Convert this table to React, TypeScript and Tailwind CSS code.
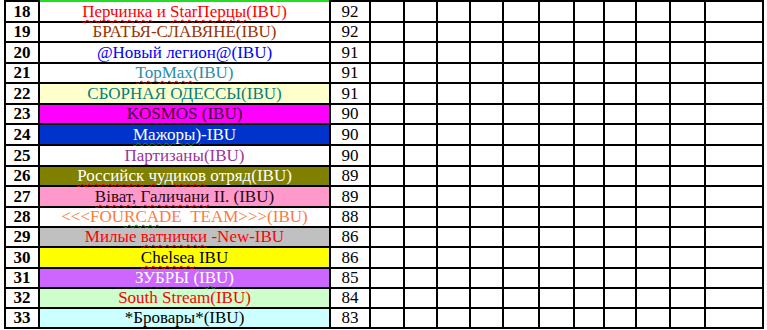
import React from "react";

type Seg = { t: string; sq?: "red" | "green" };

interface Row {
  n: number;
  name: Seg[];
  score: number;
  bg: string;
  fg: string;
}

const rows: Row[] = [
  { n: 18, name: [{ t: "Перчинка", sq: "red" }, { t: " и " }, { t: "StarПерцы", sq: "red" }, { t: "(IBU)" }], score: 92, bg: "bg-white", fg: "text-[#ff0000]" },
  { n: 19, name: [{ t: "БРАТЬЯ-СЛАВЯНЕ(IBU)" }], score: 92, bg: "bg-white", fg: "text-[#993300]" },
  { n: 20, name: [{ t: "@Новый легион@(IBU)" }], score: 91, bg: "bg-white", fg: "text-[#0000ff]" },
  { n: 21, name: [{ t: "TopMax", sq: "red" }, { t: "(IBU)" }], score: 91, bg: "bg-white", fg: "text-[#2a8cab]" },
  { n: 22, name: [{ t: "СБОРНАЯ ОДЕССЫ(IBU)" }], score: 91, bg: "bg-[#ffffcc]", fg: "text-[#008080]" },
  { n: 23, name: [{ t: "KOSMOS (IBU)" }], score: 90, bg: "bg-[#ff00ff]", fg: "text-[#3a0030]" },
  { n: 24, name: [{ t: "Мажоры)", sq: "green" }, { t: "-IBU" }], score: 90, bg: "bg-[#0033cc]", fg: "text-white" },
  { n: 25, name: [{ t: "Партизаны(IBU)" }], score: 90, bg: "bg-white", fg: "text-[#993399]" },
  { n: 26, name: [{ t: "Российск", sq: "red" }, { t: " " }, { t: "чудиков", sq: "red" }, { t: " отряд(IBU)" }], score: 89, bg: "bg-[#808000]", fg: "text-white" },
  { n: 27, name: [{ t: "Віват,", sq: "red" }, { t: " " }, { t: "Галичани", sq: "red" }, { t: " II. (IBU)" }], score: 89, bg: "bg-[#ff99cc]", fg: "text-[#2a0a10]" },
  { n: 28, name: [{ t: "<<<FOU" }, { t: "RCA", sq: "green" }, { t: "DE\u00a0\u00a0TEAM>>>(IBU)" }], score: 88, bg: "bg-white", fg: "text-[#ff7a3a]" },
  { n: 29, name: [{ t: "Милые " }, { t: "ватнички", sq: "red" }, { t: " -New-IBU" }], score: 86, bg: "bg-[#c0c0c0]", fg: "text-[#ff0000]" },
  { n: 30, name: [{ t: "Chelsea", sq: "red" }, { t: " IBU" }], score: 86, bg: "bg-[#ffff00]", fg: "text-black" },
  { n: 31, name: [{ t: "ЗУБРЫ (I" }, { t: "B", sq: "green" }, { t: "U)" }], score: 85, bg: "bg-[#cc66ff]", fg: "text-white" },
  { n: 32, name: [{ t: "South Stream(IBU)" }], score: 84, bg: "bg-[#ccffcc]", fg: "text-[#ff0000]" },
  { n: 33, name: [{ t: "*Бровары*(IBU)" }], score: 83, bg: "bg-[#ccffff]", fg: "text-black" },
];

// empty columns to the right of the score
const emptyCols = 11;

const Name = ({ segs }: { segs: Seg[] }) => (
  <span>
    {segs.map((s, i) =>
      s.sq ? (
        <span
          key={i}
          className={
            s.sq === "red"
              ? "underline decoration-wavy decoration-[#ff0000] decoration-1 underline-offset-[2px]"
              : "underline decoration-wavy decoration-[#00a000] decoration-1 underline-offset-[2px]"
          }
        >
          {s.t}
        </span>
      ) : (
        s.t
      )
    )}
  </span>
);

export default function App() {
  return (
    <div className="w-[767px] h-[330px] bg-white overflow-hidden font-[family-name:'Liberation_Serif','Times_New_Roman',serif] text-[17px] leading-[18px]">
      <div className="ml-[4px] w-[760px]">
        {/* top edge: bottom of the row above */}
        <div className="flex h-[2px]">
          <div className="w-[36px] bg-black" />
          <div className="w-[289px] bg-[#22dd22]" />
          <div className="flex-1 bg-black" />
        </div>
        <div className="grid grid-cols-[32px_289px_38px_32px_31px_31px_31px_34px_33px_28px_30px_32px_33px_56px] grid-rows-[19px_18px_19px_18px_19px_18px_19px_19px_18px_19px_18px_18px_19px_18px_18px_18px] gap-[2px] bg-black px-[2px] pb-[2px]">
          {rows.map((r) => (
            <React.Fragment key={r.n}>
              <div className="bg-white flex items-center justify-center font-bold text-black">
                {r.n}
              </div>
              <div className={`${r.bg} ${r.fg} flex items-center justify-center whitespace-pre`}>
                <Name segs={r.name} />
              </div>
              <div className="bg-white flex items-center justify-center text-black">
                {r.score}
              </div>
              {Array.from({ length: emptyCols }).map((_, i) => (
                <div key={i} className="bg-white" />
              ))}
            </React.Fragment>
          ))}
        </div>
      </div>
    </div>
  );
}
